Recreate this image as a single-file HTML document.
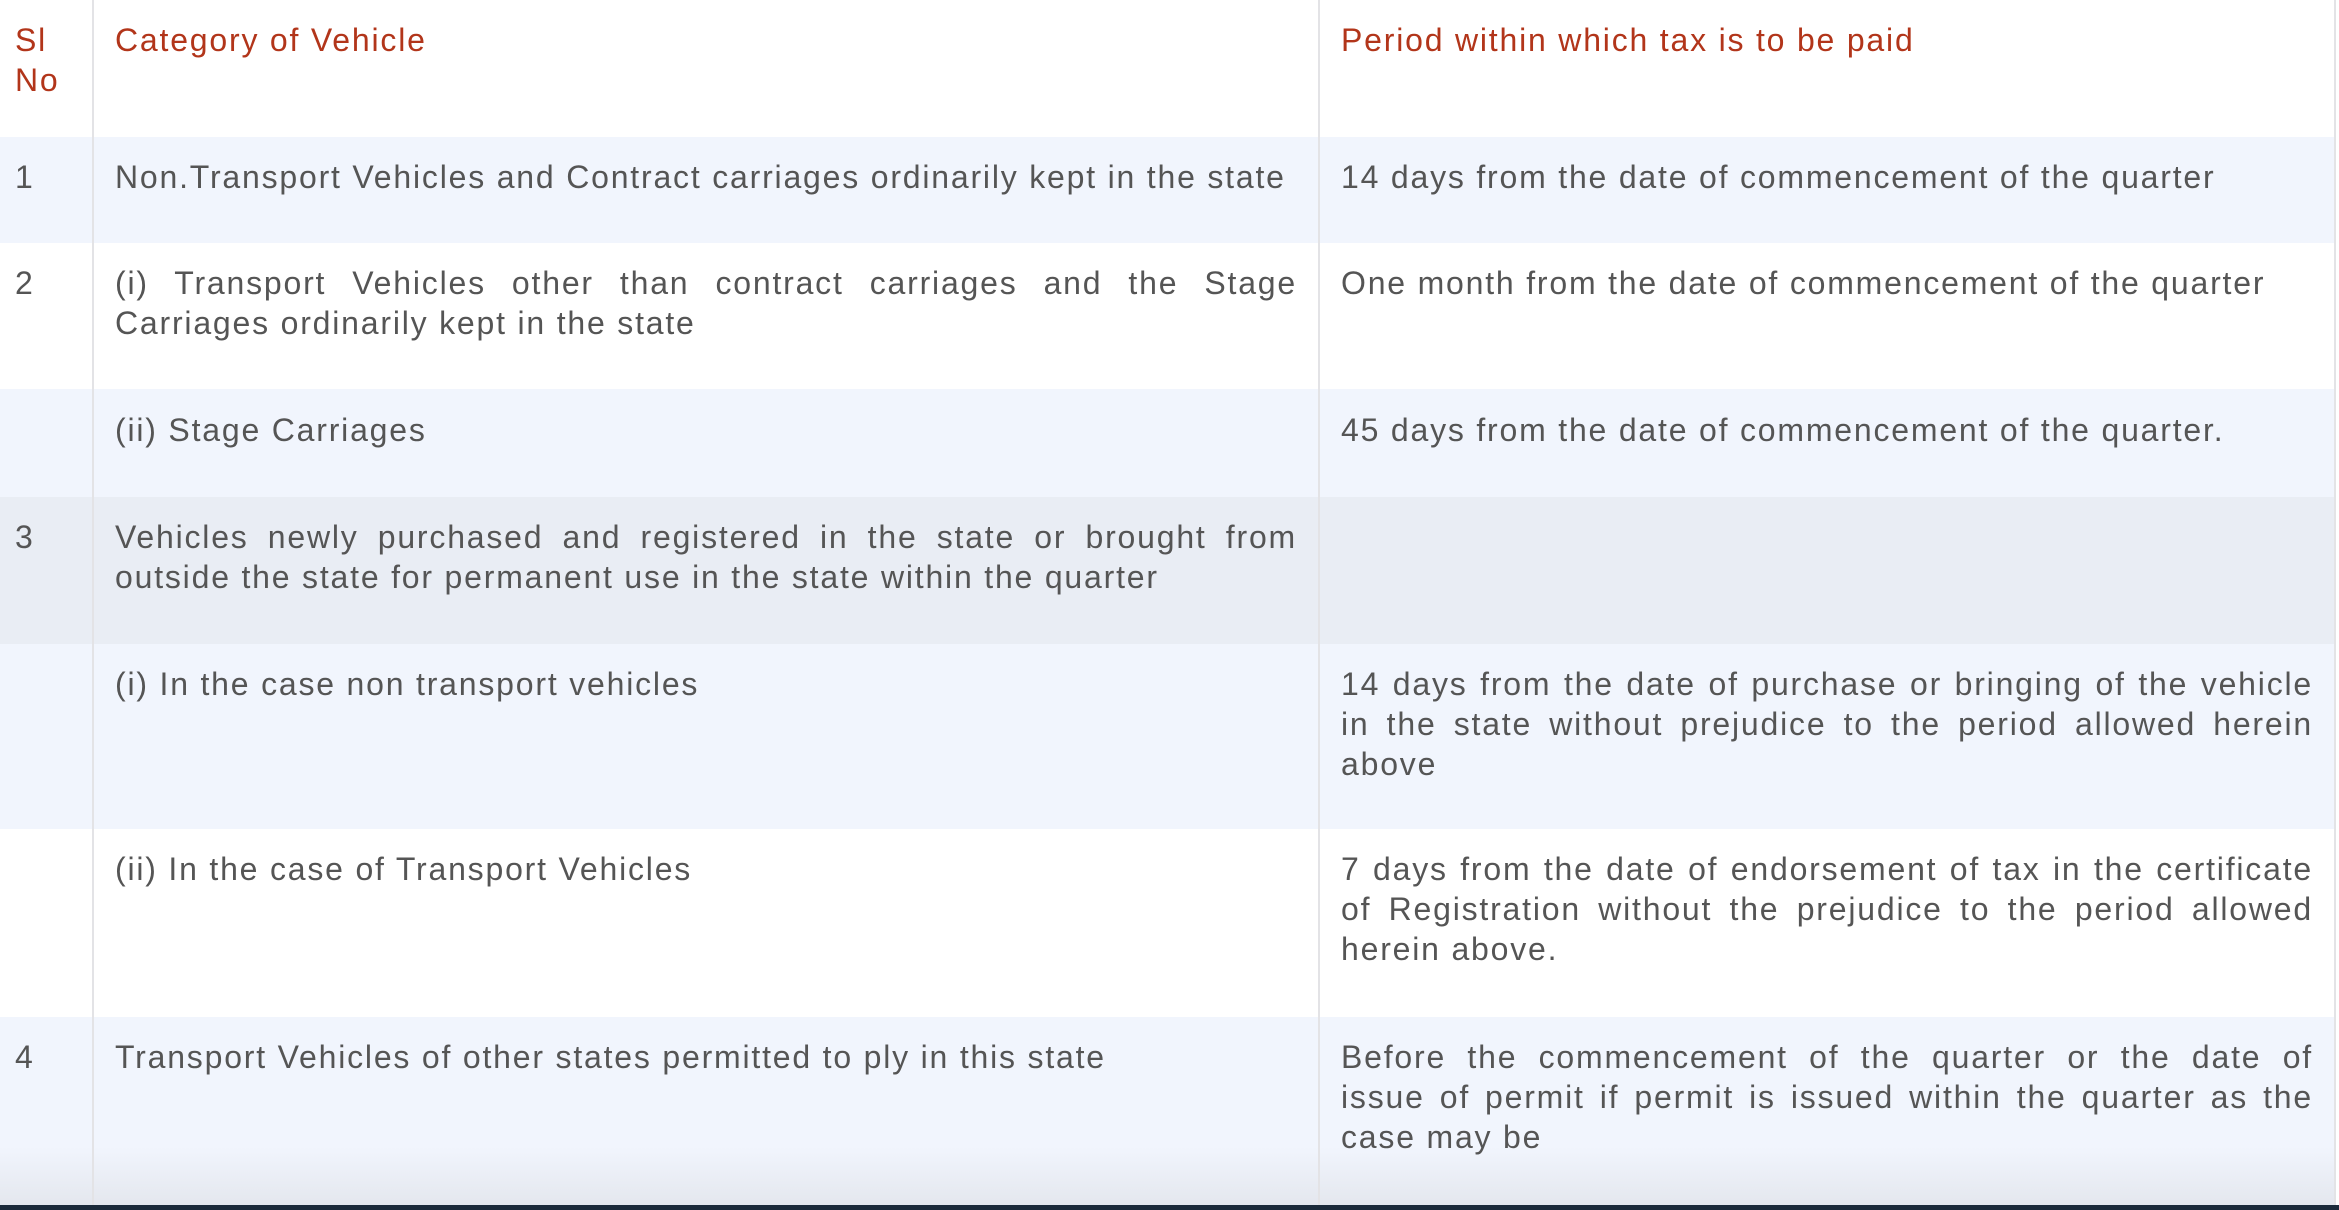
<!DOCTYPE html>
<html><head><meta charset="utf-8"><style>
body{margin:0;width:2339px;height:1210px;position:relative;background:#fff;font-family:"Liberation Sans",sans-serif;overflow:hidden}
.row{position:absolute;left:0;width:2335px}
.t{position:absolute;font-size:32px;line-height:40px;color:#555;letter-spacing:1.8px}
.h{color:#b2351a}
.j{text-align:justify;text-align-last:justify}
.vl{position:absolute;top:0;height:1205px;width:2px;background:#e3e3e6}
</style></head><body>
<div class="row" style="top:137px;height:106px;background:#f1f5fd"></div>
<div class="row" style="top:389px;height:108px;background:#f1f5fd"></div>
<div class="row" style="top:497px;height:147px;background:#e9edf4"></div>
<div class="row" style="top:644px;height:185px;background:#f1f5fd"></div>
<div class="row" style="top:1017px;height:188px;background:linear-gradient(#f1f5fd 0,#f1f5fd 130px,#e4e7ee 188px)"></div>
<div style="position:absolute;left:0;top:1205px;width:2339px;height:5px;background:#1b2a3a"></div>
<div class="vl" style="left:92px"></div>
<div class="vl" style="left:1318px"></div>
<div class="vl" style="left:2334px"></div>

<div class="t h" style="left:15px;top:20px">Sl<br>No</div>
<div class="t h" style="left:115px;top:20px">Category of Vehicle</div>
<div class="t h" style="left:1341px;top:20px">Period within which tax is to be paid</div>

<div class="t" style="left:15px;top:157px">1</div>
<div class="t" style="left:115px;top:157px">Non.Transport Vehicles and Contract carriages ordinarily kept in the state</div>
<div class="t" style="left:1341px;top:157px">14 days from the date of commencement of the quarter</div>

<div class="t" style="left:15px;top:263px">2</div>
<div class="t" style="left:115px;top:263px;width:1182px"><div class="j">(i) Transport Vehicles other than contract carriages and the Stage</div><div>Carriages ordinarily kept in the state</div></div>
<div class="t" style="left:1341px;top:263px">One month from the date of commencement of the quarter</div>

<div class="t" style="left:115px;top:410px">(ii) Stage Carriages</div>
<div class="t" style="left:1341px;top:410px">45 days from the date of commencement of the quarter.</div>

<div class="t" style="left:15px;top:517px">3</div>
<div class="t" style="left:115px;top:517px;width:1182px"><div class="j">Vehicles newly purchased and registered in the state or brought from</div><div>outside the state for permanent use in the state within the quarter</div></div>

<div class="t" style="left:115px;top:664px">(i) In the case non transport vehicles</div>
<div class="t" style="left:1341px;top:664px;width:972px"><div class="j">14 days from the date of purchase or bringing of the vehicle</div><div class="j">in the state without prejudice to the period allowed herein</div><div>above</div></div>

<div class="t" style="left:115px;top:849px">(ii) In the case of Transport Vehicles</div>
<div class="t" style="left:1341px;top:849px;width:972px"><div class="j">7 days from the date of endorsement of tax in the certificate</div><div class="j">of Registration without the prejudice to the period allowed</div><div>herein above.</div></div>

<div class="t" style="left:15px;top:1037px">4</div>
<div class="t" style="left:115px;top:1037px">Transport Vehicles of other states permitted to ply in this state</div>
<div class="t" style="left:1341px;top:1037px;width:972px"><div class="j">Before the commencement of the quarter or the date of</div><div class="j">issue of permit if permit is issued within the quarter as the</div><div>case may be</div></div>
</body></html>
